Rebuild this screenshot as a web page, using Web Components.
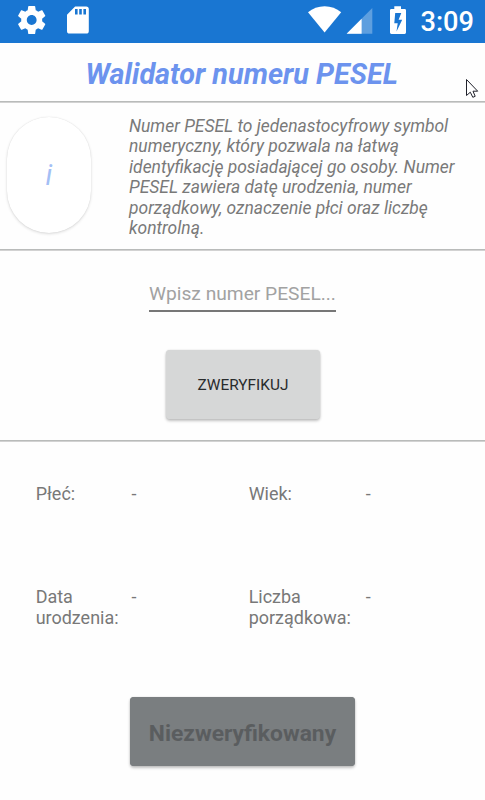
<!DOCTYPE html>
<html lang="pl">
<head>
<meta charset="utf-8">
<title>Walidator numeru PESEL</title>
<style>
  body { margin: 0; background: #fefefe; font-family: Roboto, "Noto Sans", sans-serif; color: #767676; }
</style>
</head>
<body>
<pesel-app></pesel-app>

<template id="status-bar">
  <style>
    :host { display: flex; height: 43px; background: #1976d2; color: #fff; }
    svg { display: block; }
    .icons { flex: 1; min-width: 0; }
    time { flex: none; width: 64.500px; font-size: 27.200px; font-weight: 500; line-height: 44px; }
  </style>
  <div class="icons">
    <svg viewBox="0 0 420 43" width="420" height="43" fill="#fff">
      <path transform="translate(14.9 3.2) scale(1.4)" d="M19.43 12.98c.04-.32.07-.64.07-.98s-.03-.66-.07-.98l2.11-1.65c.19-.15.24-.42.12-.64l-2-3.46c-.12-.22-.39-.3-.61-.22l-2.49 1c-.52-.4-1.08-.73-1.69-.98l-.38-2.65C14.46 2.18 14.25 2 14 2h-4c-.25 0-.46.18-.49.42l-.38 2.65c-.61.25-1.17.59-1.69.98l-2.49-1c-.23-.09-.49 0-.61.22l-2 3.46c-.13.22-.07.49.12.64l2.11 1.65c-.04.32-.07.65-.07.98s.03.66.07.98l-2.11 1.65c-.19.15-.24.42-.12.64l2 3.46c.12.22.39.3.61.22l2.49-1c.52.4 1.08.73 1.69.98l.38 2.65c.03.24.24.42.49.42h4c.25 0 .46-.18.49-.42l.38-2.65c.61-.25 1.17-.59 1.69-.98l2.49 1c.23.09.49 0 .61-.22l2-3.46c.12-.22.07-.49-.12-.64l-2.11-1.65zM12 15.5c-1.93 0-3.500-1.570-3.500-3.500s1.570-3.500 3.500-3.500 3.500 1.570 3.500 3.500-1.570 3.500-3.500 3.500z"/>
      <path fill-rule="evenodd" d="M75.100 6.500H86.200a2.600 2.600 0 0 1 2.600 2.600V31a2.600 2.600 0 0 1-2.600 2.600H69.600A2.600 2.600 0 0 1 67 31V14.700zM75 9v5.600h2.600V9zM79.200 9v5.600h2.600V9zM83.400 9v5.600H86V9z"/>
      <path d="M324.600 32.600L308 12.200C312.600 8.400 318.400 6.300 324.600 6.300S336.600 8.400 341.200 12.200z"/>
      <path fill-opacity=".3" d="M372.300 8V33.700H346.600z"/>
      <path d="M361.600 18.700V33.700H346.600z"/>
      <path fill-rule="evenodd" d="M394.300 6.200H401V8.900H404.600A1.400 1.400 0 0 1 406 10.300V32.600A1.400 1.400 0 0 1 404.600 34H391.400A1.400 1.400 0 0 1 390 32.600V10.300A1.400 1.400 0 0 1 391.400 8.900H394.300zM395.200 13L394.300 23.300H397.700L396.500 31.500L402.200 19.700H398.600L401.300 13z"/>
    </svg>
  </div>
  <time>3:09</time>
</template>

<template id="info-panel">
  <style>
    :host { display: flex; align-items: flex-start; height: 146px; box-sizing: border-box; padding: 14px 0 0 7px; font-style: italic; }
    .badge { flex: none; width: 83.500px; height: 116px; border-radius: 42px; background: #fff; box-shadow: 0 1px 3px rgba(0,0,0,.14), 0 0 1px rgba(0,0,0,.12); display: flex; align-items: center; justify-content: center; font-size: 28.500px; color: #a4bff5; }
    p { margin: -1.300px 0 0 38.500px; width: 340px; font-size: 17.430px; line-height: 20.500px; color: #797979; }
  </style>
  <div class="badge">i</div>
  <p><slot></slot></p>
</template>

<template id="action-button">
  <style>
    :host { display: block; border-radius: 4px; box-shadow: 0 2px 3px rgba(0,0,0,.24), 0 0 2px rgba(0,0,0,.12); }
    button { display: block; width: 100%; height: 100%; padding: var(--nudge, 0); border: 0; border-radius: 4px; font: inherit; color: inherit; background: inherit; }
  </style>
  <button><slot></slot></button>
</template>

<template id="result-field">
  <style>
    :host { display: grid; grid-template-columns: var(--label-width) 1fr; font-size: 17.970px; line-height: 21.300px; color: #787878; }
    b { font-weight: 400; width: 60px; }
  </style>
  <b><slot></slot></b><span><slot name="value">-</slot></span>
</template>

<template id="pesel-app">
  <style>
    :host { display: flex; flex-direction: column; height: 800px; overflow: hidden; }
    h1 { margin: 0; height: 58px; line-height: 62px; padding-right: 1.500px; text-align: center; font-size: 28.850px; font-weight: 700; font-style: italic; color: #6c93ee; }
    hr { flex: none; margin: 0; border: 0; height: 2px; background: linear-gradient(#b9bbba 50%, #d2d2d2 50%); }
    .form { height: 189px; box-sizing: border-box; padding-top: 25px; display: flex; flex-direction: column; align-items: center; }
    input { display: block; box-sizing: border-box; width: 187px; height: 35.500px; padding: 1px 0 0; border: 0; border-bottom: 2px solid #777; background: none; font: 19.200px Roboto, sans-serif; outline: 0; color: #333; }
    input::placeholder { color: #a2a2a2; opacity: 1; }
    .verify { width: 154px; height: 69px; margin-top: 38.500px; font-size: 15.400px; background: #d6d7d7; color: #292b2c; --nudge: 0 0 0 1px; }
    .results { display: grid; grid-template-columns: 213px 1fr; grid-template-rows: 103px 103px; padding: 41.200px 0 0 35.700px; --label-width: 95.700px; }
    .results :nth-child(even) { --label-width: 117px; }
    .state { width: 225px; height: 69px; align-self: center; margin-top: 7.800px; font-size: 22.800px; font-weight: 700; background: #7a7e80; color: #5a5d5f; --nudge: 3.500px 0 0; }
    .cursor { position: absolute; left: 465px; top: 78px; width: 14px; height: 21px; }
  </style>
  <status-bar></status-bar>
  <h1>Walidator numeru PESEL</h1>
  <hr>
  <info-panel>Numer PESEL to jedenastocyfrowy symbol<br>numeryczny, który pozwala na łatwą<br>identyfikację posiadającej go osoby. Numer<br>PESEL zawiera datę urodzenia, numer<br>porządkowy, oznaczenie płci oraz liczbę<br>kontrolną.</info-panel>
  <hr>
  <div class="form">
    <input placeholder="Wpisz numer PESEL...">
    <action-button class="verify">ZWERYFIKUJ</action-button>
  </div>
  <hr>
  <div class="results">
    <result-field>Płeć:</result-field>
    <result-field>Wiek:</result-field>
    <result-field>Data urodzenia:</result-field>
    <result-field>Liczba porządkowa:</result-field>
  </div>
  <action-button class="state">Niezweryfikowany</action-button>
  <svg class="cursor" viewBox="0 0 14 21"><path d="M1.500 1.500V17.500L5.300 14.200L7.800 19.300L10.200 18.300L8 13.200H12.700z" fill="#fff" stroke="#20212b" stroke-width="1"/></svg>
</template>

<script>
  for (const name of ['status-bar', 'info-panel', 'action-button', 'result-field', 'pesel-app']) {
    customElements.define(name, class extends HTMLElement {
      constructor() {
        super();
        this.attachShadow({ mode: 'open' })
          .append(document.getElementById(name).content.cloneNode(true));
      }
    });
  }
</script>
</body>
</html>
